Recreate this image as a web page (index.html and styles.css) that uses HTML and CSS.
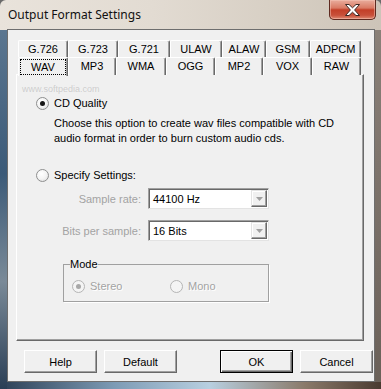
FILE: index.html
```html
<!DOCTYPE html>
<html>
<head>
<meta charset="utf-8">
<link rel="stylesheet" href="styles.css">
</head>
<body>
<div class="window">
  <div class="titlebar">
    <span class="title">Output Format Settings</span>
    <div class="closebtn">
      <svg class="xglyph" width="17" height="12" viewBox="0 0 17 12">
        <path d="M1.5 0.5 L5 0.5 L8.5 3.8 L12 0.5 L15.5 0.5 L10.6 6 L15.5 11.5 L12 11.5 L8.5 8.2 L5 11.5 L1.5 11.5 L6.4 6 Z" fill="#ffffff" stroke="#3a2622" stroke-width="1" stroke-linejoin="round"/>
      </svg>
    </div>
  </div>
  <div class="client">
    <div class="tabs">
      <div class="tabrow back">
        <div class="tab w50">G.726</div>
        <div class="tab w50">G.723</div>
        <div class="tab w52">G.721</div>
        <div class="tab w52">ULAW</div>
        <div class="tab w44">ALAW</div>
        <div class="tab w44">GSM</div>
        <div class="tab w51">ADPCM</div>
      </div>
      <div class="tabrow front">
        <div class="tab w50 selected"><span class="focus">WAV</span></div>
        <div class="tab w48">MP3</div>
        <div class="tab w50">WMA</div>
        <div class="tab w49">OGG</div>
        <div class="tab w48">MP2</div>
        <div class="tab w49">VOX</div>
        <div class="tab w49">RAW</div>
      </div>
    </div>
    <div class="panel">
      <div class="option first">
        <span class="radio checked"></span>
        <span>CD Quality</span>
      </div>
      <p class="desc">Choose this option to create wav files compatible with CD audio format in order to burn custom audio cds.</p>
      <div class="option second">
        <span class="radio"></span>
        <span>Specify Settings:</span>
      </div>
      <div class="field rate">
        <span class="flabel">Sample rate:</span>
        <div class="combo"><span class="cval">44100 Hz</span><span class="cbtn"><svg width="7" height="4" viewBox="0 0 7 4"><path d="M0 0 L7 0 L3.5 4 Z" fill="#a0a0a0"/></svg></span></div>
      </div>
      <div class="field bits">
        <span class="flabel">Bits per sample:</span>
        <div class="combo"><span class="cval">16 Bits</span><span class="cbtn"><svg width="7" height="4" viewBox="0 0 7 4"><path d="M0 0 L7 0 L3.5 4 Z" fill="#a0a0a0"/></svg></span></div>
      </div>
      <fieldset class="group">
        <legend>Mode</legend>
        <div class="grow">
          <div class="option dis stereo"><span class="radio checked disabled"></span><span>Stereo</span></div>
          <div class="option dis"><span class="radio disabled"></span><span>Mono</span></div>
        </div>
      </fieldset>
    </div>
    <div class="buttons">
      <div class="btn help">Help</div>
      <div class="btn default">Default</div>
      <div class="btn ok">OK</div>
      <div class="btn cancel">Cancel</div>
    </div>
  </div>
  <div class="wm wm-url">www.softpedia.com</div>
</div>
</body>
</html>
```
FILE: styles.css
```css
html, body {
  margin: 0;
  padding: 0;
  width: 381px;
  height: 389px;
  overflow: hidden;
  background: #6a6a6a;
}
.window {
  position: relative;
  width: 381px;
  height: 389px;
  box-sizing: border-box;
  padding: 0 6px 7px 7px;
  display: flex;
  flex-direction: column;
  border-radius: 6px 6px 0 0;
  background:
    linear-gradient(to bottom, #5b7690 0%, #3b5a78 40%, #7a8a98 70%, #2a3e55 100%) 0 30px / 7px 359px no-repeat,
    linear-gradient(to right, #2c3f55 0%, #7d9bb5 30%, #b8cfe0 55%, #8a7a6a 80%, #4a3a30 100%) 0 382px / 381px 7px no-repeat,
    linear-gradient(to bottom, #8a8078 0%, #6a6058 100%) 375px 30px / 6px 359px no-repeat,
    linear-gradient(to right, #e9e3db 0%, #e2dbd2 40%, #d8d0c5 70%, #cdc4b8 100%);
  font-family: "Liberation Sans", Arial, sans-serif;
  font-size: 11px;
  color: #000;
}
.titlebar {
  height: 29px;
  display: flex;
  justify-content: space-between;
  align-items: flex-start;
  padding-left: 1px;
}
.title {
  font-family: "Noto Sans", "Open Sans", sans-serif;
  font-size: 12px;
  line-height: 16px;
  margin-top: 7px;
  color: #111;
}
.closebtn {
  flex: none;
  width: 47px;
  height: 20px;
  margin-right: -1px;
  box-sizing: border-box;
  border: 1px solid #5e2a20;
  border-top-width: 0;
  border-radius: 0 0 5px 5px;
  background-color: #c8452f;
  background-image: linear-gradient(to bottom, #e9ad9d 0%, #d97a64 42%, #c33f28 52%, #c8503a 80%, #df8a72 100%);
  box-shadow: inset 0 0 0 1px rgba(245, 200, 185, 0.5);
  display: flex;
  align-items: center;
  justify-content: center;
}
.xglyph {
  display: block;
}
.client {
  height: 353px;
  box-sizing: border-box;
  border: 1px solid #6e6e6e;
  background: #f0f0f0;
  display: flex;
  flex-direction: column;
}
.tabs {
  margin: 10px 0 0 10px;
  width: 343px;
  position: relative;
  z-index: 1;
}
.tabrow {
  display: flex;
}
.tabrow.back { height: 17px; }
.tabrow.front { height: 18px; margin-bottom: -1px; }
.tab {
  box-sizing: border-box;
  height: 100%;
  border-left: 1px solid #fff;
  border-top: 1px solid #fff;
  border-right: 1px solid #696969;
  border-radius: 2px 2px 0 0;
  box-shadow: inset -1px 0 0 #a0a0a0;
  background: #f0f0f0;
  display: flex;
  align-items: center;
  justify-content: center;
  line-height: 13px;
}
.tab.selected {
  height: 19px;
  padding: 1px;
}
.focus {
  box-sizing: border-box;
  width: 100%;
  height: 100%;
  outline: 1px dotted #000;
  outline-offset: -1px;
  display: flex;
  align-items: center;
  justify-content: center;
}
.w44 { width: 44px; }
.w48 { width: 48px; }
.w49 { width: 49px; }
.w50 { width: 50px; }
.w51 { width: 51px; }
.w52 { width: 52px; }
.panel {
  margin-left: 8px;
  width: 348px;
  height: 267px;
  box-sizing: border-box;
  border-top: 1px solid #fff;
  border-left: 1px solid #fff;
  border-right: 1px solid #696969;
  border-bottom: 1px solid #696969;
  box-shadow: inset -1px -1px 0 #a0a0a0;
  display: flex;
  flex-direction: column;
}
.option {
  display: flex;
  align-items: center;
  height: 16px;
  gap: 5px;
  padding-left: 19px;
}
.option.first { margin-top: 20px; }
.option.second { margin-top: 21px; }
.radio {
  width: 13px;
  height: 13px;
  box-sizing: border-box;
  border-radius: 50%;
  border: 1px solid #8e8f8f;
  background: radial-gradient(circle at 40% 35%, #ffffff 0%, #f4f4f4 50%, #d8d8d8 100%);
  display: flex;
  align-items: center;
  justify-content: center;
  flex: none;
}
.radio.checked::after {
  content: "";
  width: 5px;
  height: 5px;
  border-radius: 50%;
  background: #151515;
}
.radio.disabled {
  border-color: #b5b5b5;
  background: #f4f4f4;
}
.radio.disabled.checked::after { background: #a8a8a8; }
.desc {
  margin: 5px 0 0 37px;
  line-height: 15px;
  width: 290px;
}
.field {
  display: flex;
  align-items: center;
  height: 21px;
}
.field.rate { margin-top: 5px; }
.field.bits { margin-top: 11px; }
.flabel {
  width: 124px;
  text-align: right;
  color: #a3a3a3;
  margin-right: 7px;
}
.combo {
  width: 121px;
  height: 21px;
  box-sizing: border-box;
  border: 1px solid #a0a0a0;
  border-right-color: #e3e3e3;
  border-bottom-color: #e3e3e3;
  box-shadow: inset 1px 1px 0 #696969;
  background: #fff;
  display: flex;
  align-items: center;
  padding: 1px 1px 1px 4px;
}
.cval { flex: 1; }
.cbtn {
  width: 16px;
  height: 17px;
  box-sizing: border-box;
  background: #f0f0f0;
  border-top: 1px solid #e3e3e3;
  border-left: 1px solid #e3e3e3;
  border-right: 1px solid #696969;
  border-bottom: 1px solid #696969;
  box-shadow: inset -1px -1px 0 #a0a0a0, inset 1px 1px 0 #fff;
  display: flex;
  align-items: center;
  justify-content: center;
}
.group {
  margin: 17px 0 0 46px;
  width: 206px;
  height: 44px;
  box-sizing: border-box;
  border: 1px solid #a0a0a0;
  box-shadow: 1px 1px 0 #fff;
  padding: 0;
}
.group legend {
  padding: 0;
  margin-left: 6px;
  line-height: 13px;
}
.grow {
  display: flex;
  margin-top: 7px;
}
.option.dis {
  color: #a3a3a3;
  text-shadow: 1px 1px 0 #fff;
  padding-left: 8px;
}
.option.stereo { width: 98px; box-sizing: border-box; }
.buttons {
  display: flex;
  margin-top: 9px;
  padding-left: 16px;
}
.btn {
  width: 73px;
  height: 23px;
  box-sizing: border-box;
  border-top: 1px solid #fff;
  border-left: 1px solid #fff;
  border-right: 1px solid #696969;
  border-bottom: 1px solid #696969;
  box-shadow: inset -1px -1px 0 #a0a0a0;
  background: #f0f0f0;
  display: flex;
  align-items: center;
  justify-content: center;
}
.btn.default { margin-left: 7px; }
.btn.ok {
  margin-left: 43px;
  border: 1px solid #000;
  box-shadow: inset 1px 1px 0 #fff, inset -1px -1px 0 #696969, inset -2px -2px 0 #a0a0a0;
}
.btn.cancel { margin-left: 7px; }
.wm {
  position: absolute;
  pointer-events: none;
  white-space: nowrap;
}
.wm-url {
  z-index: 3;
  left: 22px;
  top: 84px;
  font-family: "Liberation Sans", sans-serif;
  font-size: 9px;
  color: rgba(150, 150, 150, 0.4);
}
```
